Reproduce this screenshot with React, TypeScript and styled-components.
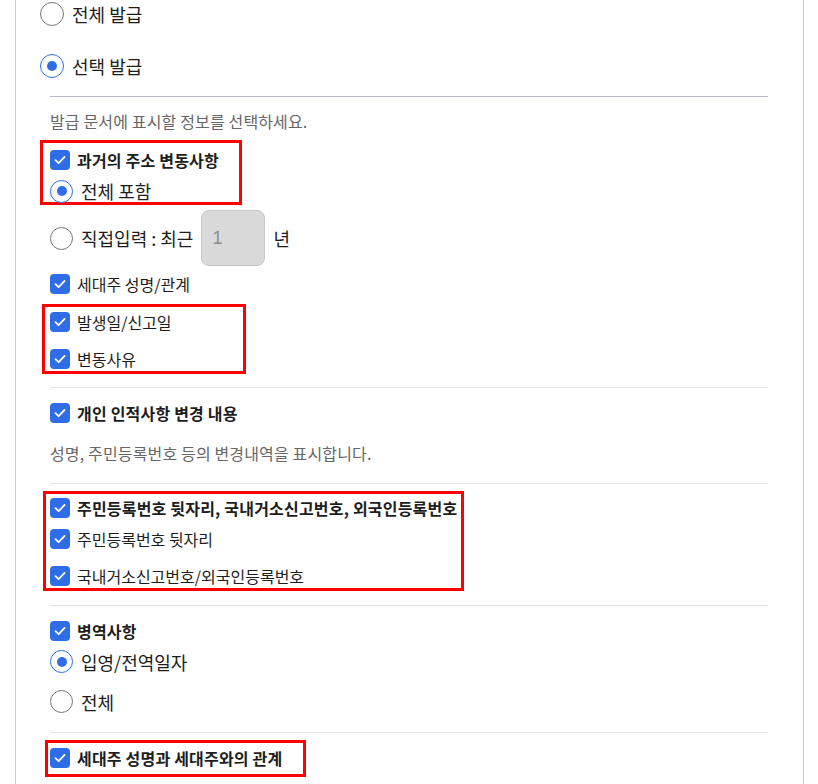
import React from 'react';
import styled, { createGlobalStyle } from 'styled-components';

const GlobalStyle = createGlobalStyle`
  html, body {
    margin: 0;
    padding: 0;
    background: #fff;
  }
  body {
    font-family: 'Noto Sans CJK KR', 'Noto Sans', sans-serif;
    color: #1d1d1d;
  }
`;

const Panel = styled.div`
  box-sizing: border-box;
  width: 789px;
  min-height: 784px;
  margin-left: 15px;
  padding: 2px 0 0 24px;
  border-left: 1px solid #cacaca;
  border-right: 1px solid #cacaca;
`;

const Row = styled.label<{ $mt?: number; $h?: number }>`
  display: flex;
  align-items: center;
  gap: 8px;
  height: ${(p) => p.$h ?? 23}px;
  margin-top: ${(p) => p.$mt ?? 0}px;
  font-size: 18px;
  line-height: 22px;
  white-space: nowrap;
`;

const CheckLine = styled.label<{ $mt?: number; $bold?: boolean }>`
  display: flex;
  align-items: center;
  gap: 7px;
  height: 20px;
  margin-top: ${(p) => p.$mt ?? 0}px;
  font-size: 16px;
  line-height: 20px;
  font-weight: ${(p) => (p.$bold ? 700 : 400)};
  letter-spacing: ${(p) => (p.$bold ? 0.2 : 0)}px;
  white-space: nowrap;
`;

const Circle = styled.span<{ $on?: boolean; $size: number }>`
  box-sizing: border-box;
  flex: none;
  display: flex;
  align-items: center;
  justify-content: center;
  width: ${(p) => p.$size}px;
  height: ${(p) => p.$size}px;
  border-radius: 50%;
  border: 1.5px solid ${(p) => (p.$on ? '#2e6de6' : '#767676')};
  background: #fff;

  &::after {
    content: '';
    display: ${(p) => (p.$on ? 'block' : 'none')};
    width: 10px;
    height: 10px;
    border-radius: 50%;
    background: #2e6de6;
  }
`;

const Box = styled.span`
  flex: none;
  display: flex;
  align-items: center;
  justify-content: center;
  width: 20px;
  height: 20px;
  border-radius: 4px;
  background: #2e6de6;
`;

const Section = styled.div`
  width: 718px;
  margin-left: 10px;
  display: flex;
  flex-direction: column;
`;

const Divider = styled.div<{ $mt: number; $tone?: string }>`
  height: 1px;
  margin-top: ${(p) => p.$mt}px;
  background: ${(p) => p.$tone ?? '#e3e3e3'};
`;

const Hint = styled.p<{ $mt: number }>`
  margin: ${(p) => p.$mt}px 0 0;
  font-size: 16px;
  line-height: 20px;
  letter-spacing: 0.15px;
  color: #666;
  white-space: nowrap;
`;

const Highlight = styled.div<{ $x: number; $w: number; $mt: number; $pt: number; $pb: number }>`
  box-sizing: border-box;
  width: ${(p) => p.$w}px;
  margin: ${(p) => p.$mt}px 0 0 -${(p) => p.$x}px;
  padding: ${(p) => p.$pt}px 0 ${(p) => p.$pb}px ${(p) => p.$x - 3}px;
  border: 3px solid #f00;
`;

const YearInput = styled.span`
  box-sizing: border-box;
  display: flex;
  align-items: center;
  width: 64px;
  height: 56px;
  padding-left: 10px;
  border: 1px solid #c7c7c7;
  border-radius: 8px;
  background: #d9d9d9;
  color: #8c8c8c;
  font-family: 'Liberation Sans', sans-serif;
  font-size: 18px;
`;

const Radio = ({ on, size = 23 }: { on?: boolean; size?: number }) => <Circle $on={on} $size={size} />;

const Check = () => (
  <Box>
    <svg width="14" height="14" viewBox="0 0 14 14" fill="none">
      <polyline points="2.5,7.2 5.6,10.2 11.6,3.9" stroke="#fff" strokeWidth="1.8" strokeLinecap="round" strokeLinejoin="round" />
    </svg>
  </Box>
);

const Item = ({ label, bold, mt }: { label: string; bold?: boolean; mt?: number }) => (
  <CheckLine $bold={bold} $mt={mt}>
    <Check />
    {label}
  </CheckLine>
);

export default function App() {
  return (
    <>
      <GlobalStyle />
      <Panel>
        <Row $h={24}>
          <Radio size={24} />
          전체 발급
        </Row>
        <Row $h={24} $mt={28}>
          <Radio size={24} on />
          선택 발급
        </Row>
        <Section>
          <Divider $mt={18} $tone="#b6bac4" />
          <Hint $mt={14}>발급 문서에 표시할 정보를 선택하세요.</Hint>

          <Highlight $x={10} $w={202} $mt={9} $pt={7} $pb={0}>
            <Item label="과거의 주소 변동사항" bold />
            <Row $mt={10} $h={22}>
              <Radio on />
              전체 포함
            </Row>
          </Highlight>

          <Row $mt={5} $h={56}>
            <Radio />
            직접입력 : 최근
            <YearInput>1</YearInput>
            <span>년</span>
          </Row>

          <Item label="세대주 성명/관계" mt={8} />

          <Highlight $x={8} $w={204} $mt={10} $pt={5} $pb={2}>
            <Item label="발생일/신고일" />
            <Item label="변동사유" mt={17} />
          </Highlight>

          <Divider $mt={13} />
          <Item label="개인 인적사항 변경 내용" bold mt={15} />
          <Hint $mt={20}>성명, 주민등록번호 등의 변경내역을 표시합니다.</Hint>
          <Divider $mt={20} />

          <Highlight $x={7} $w={421} $mt={7} $pt={4} $pb={2}>
            <Item label="주민등록번호 뒷자리, 국내거소신고번호, 외국인등록번호" bold />
            <Item label="주민등록번호 뒷자리" mt={11} />
            <Item label="국내거소신고번호/외국인등록번호" mt={17} />
          </Highlight>

          <Divider $mt={14} />
          <Item label="병역사항" bold mt={15} />
          <Row $mt={9}>
            <Radio on />
            입영/전역일자
          </Row>
          <Row $mt={17}>
            <Radio />
            전체
          </Row>
          <Divider $mt={19} />

          <Highlight $x={5} $w={261} $mt={7} $pt={5} $pb={6}>
            <Item label="세대주 성명과 세대주와의 관계" bold />
          </Highlight>
        </Section>
      </Panel>
    </>
  );
}
